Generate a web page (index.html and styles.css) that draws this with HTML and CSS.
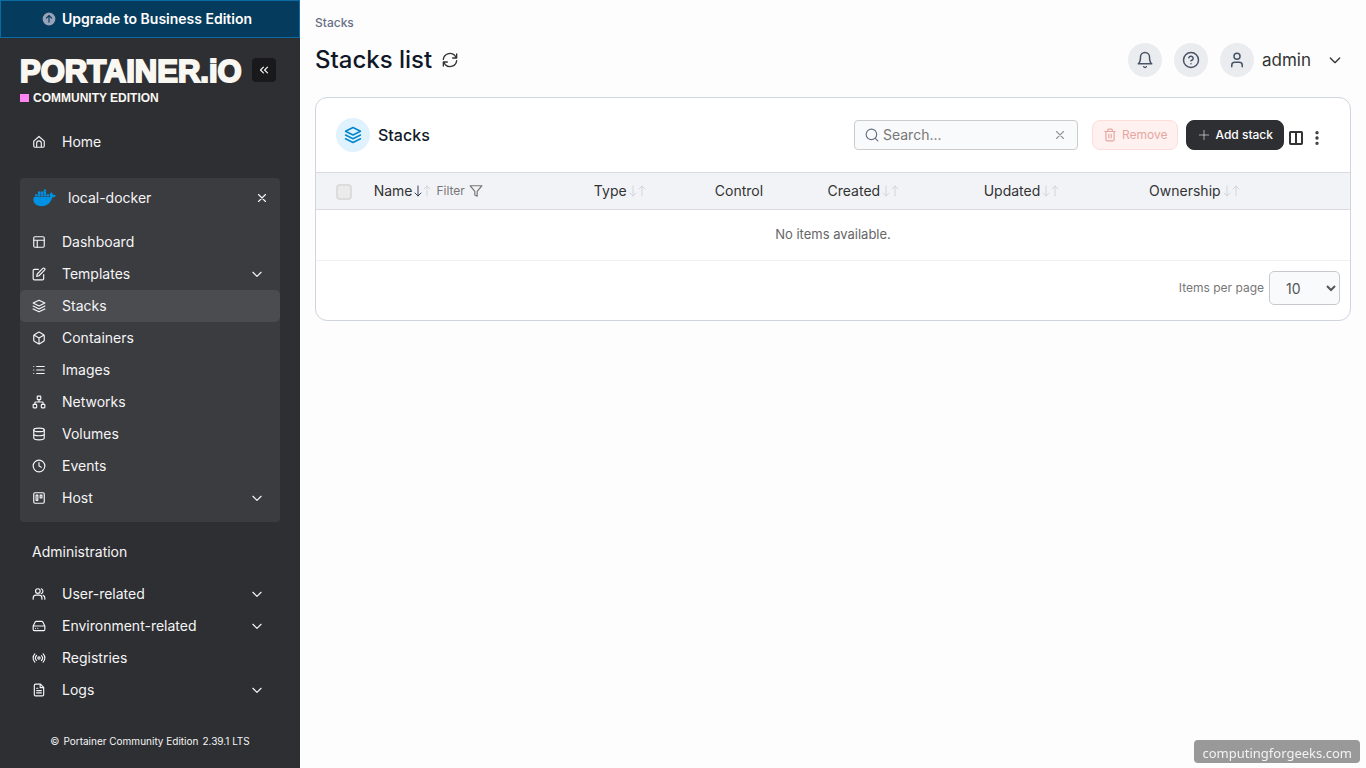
FILE: index.html
```html
<!DOCTYPE html>
<html lang="en">
<head>
  <meta charset="UTF-8">
  <meta name="viewport" content="width=device-width, initial-scale=1">
  <title>Portainer | Stacks</title>
  <link rel="stylesheet" href="styles.css">
</head>
<body>

<!-- Icon set -->
<svg class="sprite" aria-hidden="true">
  <symbol id="home" viewBox="0 0 24 24"><path d="M8 21v-7a4 4 0 0 1 8 0v7M3 10.500 12 2.500l9 8V19a2 2 0 0 1-2 2H5a2 2 0 0 1-2-2z"/></symbol>
  <symbol id="layout" viewBox="0 0 24 24"><rect x="3" y="3" width="18" height="18" rx="2"/><path d="M3 9h18M9 21V9"/></symbol>
  <symbol id="edit" viewBox="0 0 24 24"><path d="M11 4H4a2 2 0 0 0-2 2v14a2 2 0 0 0 2 2h14a2 2 0 0 0 2-2v-7"/><path d="M18.500 2.500a2.120 2.120 0 0 1 3 3L12 15l-4 1 1-4Z"/></symbol>
  <symbol id="layers" viewBox="0 0 24 24"><path d="M12 2 22 7 12 12 2 7ZM2 12l10 5 10-5M2 17l10 5 10-5"/></symbol>
  <symbol id="box" viewBox="0 0 24 24"><path d="M21 8a2 2 0 0 0-1-1.730l-7-4a2 2 0 0 0-2 0l-7 4A2 2 0 0 0 3 8v8a2 2 0 0 0 1 1.730l7 4a2 2 0 0 0 2 0l7-4A2 2 0 0 0 21 16ZM3.300 7 12 12l8.700-5M12 22V12"/></symbol>
  <symbol id="list" viewBox="0 0 24 24"><path d="M8 6h13M8 12h13M8 18h13M3 6h.01M3 12h.01M3 18h.01"/></symbol>
  <symbol id="network" viewBox="0 0 24 24"><rect x="16" y="16" width="6" height="6" rx="1"/><rect x="2" y="16" width="6" height="6" rx="1"/><rect x="9" y="2" width="6" height="6" rx="1"/><path d="M5 16v-3a1 1 0 0 1 1-1h12a1 1 0 0 1 1 1v3M12 12V8"/></symbol>
  <symbol id="database" viewBox="0 0 24 24"><ellipse cx="12" cy="5" rx="9" ry="3"/><path d="M3 5v14c0 1.660 4 3 9 3s9-1.340 9-3V5M21 12c0 1.660-4 3-9 3s-9-1.340-9-3"/></symbol>
  <symbol id="clock" viewBox="0 0 24 24"><circle cx="12" cy="12" r="10"/><path d="M12 6v6l4 2"/></symbol>
  <symbol id="trello" viewBox="0 0 24 24"><rect x="3" y="3" width="18" height="18" rx="2"/><path d="M7 7h3v9H7zM14 7h3v5h-3z"/></symbol>
  <symbol id="users" viewBox="0 0 24 24"><path d="M17 21v-2a5 5 0 0 0-5-5H7a5 5 0 0 0-5 5v2M22 21v-2a5 5 0 0 0-3-4.600M16 3.100a4.500 4.500 0 0 1 0 8.300"/><circle cx="10" cy="7" r="4"/></symbol>
  <symbol id="drive" viewBox="0 0 24 24"><path d="M22 12H2M5.450 5.110 2 12v6a2 2 0 0 0 2 2h16a2 2 0 0 0 2-2v-6l-3.450-6.890A2 2 0 0 0 16.760 4H7.240a2 2 0 0 0-1.790 1.110ZM6 16h.01M10 16h.01"/></symbol>
  <symbol id="radio" viewBox="0 0 24 24"><path d="M4.900 19.100C1 15.200 1 8.800 4.900 4.900M7.800 16.200c-2.300-2.300-2.300-6.100 0-8.500"/><circle cx="12" cy="12" r="2"/><path d="M16.200 7.800c2.300 2.300 2.300 6.100 0 8.500M19.100 4.900C23 8.800 23 15.100 19.100 19"/></symbol>
  <symbol id="file" viewBox="0 0 24 24"><path d="M14.500 2H6a2 2 0 0 0-2 2v16a2 2 0 0 0 2 2h12a2 2 0 0 0 2-2V7.500ZM14 2v6h6M16 13H8M16 17H8M10 9H8"/></symbol>
  <symbol id="chevron" viewBox="0 0 24 24"><path d="m5 9 7 7 7-7"/></symbol>
  <symbol id="chevrons-left" viewBox="0 0 24 24"><path d="m11 17-5-5 5-5M18 17l-5-5 5-5"/></symbol>
  <symbol id="x" viewBox="0 0 24 24"><path d="M18 6 6 18M6 6l12 12"/></symbol>
  <symbol id="refresh" viewBox="0 0 24 24"><path d="M2 11a10 10 0 0 1 17-6l3 4M22 3v6h-6M22 13a10 10 0 0 1-17 6l-3-4M2 21v-6h6"/></symbol>
  <symbol id="bell" viewBox="0 0 24 24"><path d="M6 8a6 6 0 0 1 12 0c0 7 3 9 3 9H3s3-2 3-9M10.300 21a1.940 1.940 0 0 0 3.400 0"/></symbol>
  <symbol id="help" viewBox="0 0 24 24"><circle cx="12" cy="12" r="10"/><path d="M9.090 9a3 3 0 0 1 5.830 1c0 2-3 3-3 3M12 17h.01"/></symbol>
  <symbol id="user" viewBox="0 0 24 24"><circle cx="12" cy="7" r="4"/><path d="M19 21v-2a4 4 0 0 0-4-4H9a4 4 0 0 0-4 4v2"/></symbol>
  <symbol id="search" viewBox="0 0 24 24"><circle cx="11" cy="11" r="9"/><path d="m22 22-4.300-4.300"/></symbol>
  <symbol id="trash" viewBox="0 0 24 24"><path d="M3 6h18M19 6v14a2 2 0 0 1-2 2H7a2 2 0 0 1-2-2V6M8 6V4a2 2 0 0 1 2-2h4a2 2 0 0 1 2 2v2M10 11v6M14 11v6"/></symbol>
  <symbol id="plus" viewBox="0 0 24 24"><path d="M12 4v16M4 12h16"/></symbol>
  <symbol id="columns" viewBox="0 0 24 24"><rect x="3" y="3" width="18" height="18" rx="1"/><path d="M12 3v18"/></symbol>
  <symbol id="dots" viewBox="0 0 24 24"><circle cx="12" cy="4" r="1"/><circle cx="12" cy="12" r="1"/><circle cx="12" cy="20" r="1"/></symbol>
  <symbol id="filter" viewBox="0 0 24 24"><path d="M22 3H2l8 9.460V19l4 2v-8.540Z"/></symbol>
  <symbol id="down" viewBox="0 0 8 12"><path d="M4 1v10M1 8l3 3 3-3"/></symbol>
  <symbol id="up" viewBox="0 0 8 12"><path d="M4 11V1M1 4l3-3 3 3"/></symbol>
</svg>

<div class="app">
  <aside class="sidebar">
    <button class="upgrade">
      <svg class="upgrade-icon" viewBox="0 0 24 24"><circle cx="12" cy="12" r="12"/><path d="M12 18V6M7 11l5-5 5 5"/></svg>
      Upgrade to Business Edition
    </button>

    <div class="brand">
      <a class="logo" href="#">
        <span class="logo-name">PORTAINER.iO</span>
        <span class="logo-edition">COMMUNITY EDITION</span>
      </a>
      <button class="collapse" aria-label="Collapse sidebar"><svg class="icon"><use href="#chevrons-left"/></svg></button>
    </div>

    <nav class="menu">
      <a class="item" href="#"><svg class="icon"><use href="#home"/></svg><span>Home</span></a>

      <div class="environment">
        <div class="environment-head">
          <svg class="docker" viewBox="0 0 24 18">
            <path d="M1 8h17c-.8-1.200-.7-2.800 0-3.900l1-1.100c1 .7 1.700 1.700 1.800 2.800 1.100-.2 2.300 0 3.100.6-.8 1.500-2.100 2-3.800 2C18.500 13.900 15 17.500 9 17.500 3 17.500.3 14 .3 10Z"/>
            <path d="M2.200 5h2.500v2.500H2.200zM5.200 5h2.500v2.500H5.200zM8.200 5h2.500v2.500H8.200zM11.200 5h2.500v2.500h-2.500zM14.200 5h2.500v2.500h-2.500zM5.200 2.300h2.500v2.400H5.200zM8.200 2.300h2.500v2.400H8.200zM11.200 2.300h2.500v2.400h-2.500zM11.200 0h2.500v2h-2.500z"/>
          </svg>
          <span>local-docker</span>
          <button class="close" aria-label="Close environment"><svg class="icon"><use href="#x"/></svg></button>
        </div>
        <a class="item" href="#"><svg class="icon"><use href="#layout"/></svg><span>Dashboard</span></a>
        <a class="item" href="#"><svg class="icon"><use href="#edit"/></svg><span>Templates</span><svg class="icon arrow"><use href="#chevron"/></svg></a>
        <a class="item active" href="#"><svg class="icon"><use href="#layers"/></svg><span>Stacks</span></a>
        <a class="item" href="#"><svg class="icon"><use href="#box"/></svg><span>Containers</span></a>
        <a class="item" href="#"><svg class="icon"><use href="#list"/></svg><span>Images</span></a>
        <a class="item" href="#"><svg class="icon"><use href="#network"/></svg><span>Networks</span></a>
        <a class="item" href="#"><svg class="icon"><use href="#database"/></svg><span>Volumes</span></a>
        <a class="item" href="#"><svg class="icon"><use href="#clock"/></svg><span>Events</span></a>
        <a class="item" href="#"><svg class="icon"><use href="#trello"/></svg><span>Host</span><svg class="icon arrow"><use href="#chevron"/></svg></a>
      </div>

      <h2 class="section">Administration</h2>
      <a class="item" href="#"><svg class="icon"><use href="#users"/></svg><span>User-related</span><svg class="icon arrow"><use href="#chevron"/></svg></a>
      <a class="item" href="#"><svg class="icon"><use href="#drive"/></svg><span>Environment-related</span><svg class="icon arrow"><use href="#chevron"/></svg></a>
      <a class="item" href="#"><svg class="icon"><use href="#radio"/></svg><span>Registries</span></a>
      <a class="item" href="#"><svg class="icon"><use href="#file"/></svg><span>Logs</span><svg class="icon arrow"><use href="#chevron"/></svg></a>
    </nav>

    <footer class="version"><span>©</span><span>Portainer Community Edition</span><span>2.39.1 LTS</span></footer>
  </aside>

  <main class="content">
    <a class="breadcrumb" href="#">Stacks</a>

    <header class="page-header">
      <h1>Stacks list</h1>
      <button class="refresh" aria-label="Refresh"><svg class="icon"><use href="#refresh"/></svg></button>
      <div class="user-area">
        <button class="round" aria-label="Notifications"><svg class="icon"><use href="#bell"/></svg></button>
        <button class="round" aria-label="Help"><svg class="icon"><use href="#help"/></svg></button>
        <button class="account">
          <span class="round"><svg class="icon"><use href="#user"/></svg></span>
          <span class="account-name">admin</span>
          <svg class="icon"><use href="#chevron"/></svg>
        </button>
      </div>
    </header>

    <section class="card">
      <div class="card-header">
        <span class="badge"><svg class="icon"><use href="#layers"/></svg></span>
        <h2>Stacks</h2>
        <div class="search">
          <svg class="icon"><use href="#search"/></svg>
          <input type="text" placeholder="Search..." aria-label="Search">
          <button aria-label="Clear search"><svg class="icon"><use href="#x"/></svg></button>
        </div>
        <div class="actions">
          <button class="btn btn-remove" disabled><svg class="icon"><use href="#trash"/></svg>Remove</button>
          <button class="btn btn-add"><svg class="icon"><use href="#plus"/></svg>Add stack</button>
        </div>
        <div class="settings">
          <button aria-label="Columns"><svg class="icon"><use href="#columns"/></svg></button>
          <button aria-label="Table settings"><svg class="icon"><use href="#dots"/></svg></button>
        </div>
      </div>

      <table class="table">
        <colgroup>
          <col class="col-check"><col class="col-name"><col class="col-type"><col class="col-control"><col class="col-created"><col class="col-updated"><col>
        </colgroup>
        <thead>
          <tr>
            <th class="check"><input type="checkbox" aria-label="Select all" disabled></th>
            <th>
              <div class="th">
                <span>Name</span>
                <span class="sort sorted"><svg><use href="#down"/></svg><svg><use href="#up"/></svg></span>
                <button class="filter">Filter <svg class="icon"><use href="#filter"/></svg></button>
              </div>
            </th>
            <th><div class="th"><span>Type</span><span class="sort"><svg><use href="#down"/></svg><svg><use href="#up"/></svg></span></div></th>
            <th><div class="th"><span>Control</span></div></th>
            <th><div class="th"><span>Created</span><span class="sort"><svg><use href="#down"/></svg><svg><use href="#up"/></svg></span></div></th>
            <th><div class="th"><span>Updated</span><span class="sort"><svg><use href="#down"/></svg><svg><use href="#up"/></svg></span></div></th>
            <th><div class="th"><span>Ownership</span><span class="sort"><svg><use href="#down"/></svg><svg><use href="#up"/></svg></span></div></th>
          </tr>
        </thead>
        <tbody>
          <tr><td class="empty" colspan="7">No items available.</td></tr>
        </tbody>
      </table>

      <div class="card-footer">
        <label for="pageSize">Items per page</label>
        <select id="pageSize">
          <option>10</option>
          <option>25</option>
          <option>50</option>
          <option>100</option>
        </select>
      </div>
    </section>
  </main>
</div>

<div class="watermark">computingforgeeks.com</div>

</body>
</html>
```

FILE: styles.css
```css
* {
  box-sizing: border-box;
}

body {
  margin: 0;
  font-family: Inter, "Liberation Sans", sans-serif;
  font-size: 14px;
  line-height: 20px;
  color: #333;
  background: #fdfdfd;
}

a {
  color: inherit;
  text-decoration: none;
}

button {
  padding: 0;
  border: none;
  background: none;
  font: inherit;
  color: inherit;
  cursor: pointer;
}

h1, h2 {
  margin: 0;
  font-weight: 500;
}

.sprite {
  position: absolute;
  width: 0;
  height: 0;
}

.icon, .sort svg {
  display: block;
  flex: none;
  width: 14px;
  height: 14px;
  fill: none;
  stroke: currentColor;
  stroke-width: 2;
  stroke-linecap: round;
  stroke-linejoin: round;
}

.app {
  display: flex;
  min-height: 100vh;
}

/* Sidebar */
.sidebar {
  flex: none;
  display: flex;
  flex-direction: column;
  width: 300px;
  background: #2e2f33;
  color: #f5f5f6;
}

.upgrade {
  display: flex;
  align-items: center;
  justify-content: center;
  gap: 6px;
  height: 38px;
  padding-right: 6px;
  border: 1px solid #0b6ba3;
  background: #053b5c;
  color: #fff;
  font-weight: 600;
}

.upgrade-icon {
  width: 14px;
  height: 14px;
  fill: #98a2b8;
  stroke: #053b5c;
  stroke-width: 2;
}

.brand {
  display: flex;
  align-items: flex-start;
  justify-content: space-between;
  padding: 20px 24px 0 20px;
}

.logo {
  display: flex;
  flex-direction: column;
  gap: 7px;
  color: #f9f7f2;
}

.logo-name {
  font-family: "Liberation Sans", Arial, sans-serif;
  font-size: 31px;
  font-weight: 700;
  line-height: 27px;
  -webkit-text-stroke: 2px currentColor;
}

.logo-edition {
  display: flex;
  align-items: center;
  gap: 4px;
  font-family: "Liberation Sans", Arial, sans-serif;
  font-size: 12px;
  font-weight: 700;
  line-height: 12px;
}

.logo-edition::before {
  content: "";
  width: 9px;
  height: 8px;
  background: #ff85f3;
}

.collapse {
  display: grid;
  place-items: center;
  width: 24px;
  height: 24px;
  border-radius: 4px;
  background: #19191b;
}

.menu {
  padding: 22px 20px 0;
}

.item {
  display: flex;
  align-items: center;
  gap: 16px;
  height: 32px;
  padding: 0 16px 0 12px;
  border-radius: 5px;
}

.item.active {
  background: #4b4c50;
}

.arrow {
  margin-left: auto;
}

.environment {
  margin: 20px 0;
  padding-bottom: 8px;
  border-radius: 4px;
  background: #3b3c40;
}

.environment-head {
  display: flex;
  align-items: center;
  gap: 12px;
  height: 40px;
  margin-bottom: 8px;
  padding: 0 11px 0 13px;
}

.docker {
  width: 23px;
  height: 18px;
  fill: #0091e2;
}

.close {
  margin-left: auto;
}

.section {
  margin-bottom: 16px;
  padding: 0 12px;
  font-size: 14px;
  font-weight: 400;
  line-height: 20px;
}

.version {
  display: flex;
  justify-content: center;
  gap: 4px;
  margin-top: auto;
  padding-bottom: 17px;
  font-size: 10px;
  line-height: 20px;
}

/* Page */
.content {
  flex: 1;
  min-width: 0;
  padding: 13px 15px;
}

.breadcrumb {
  display: block;
  font-size: 12px;
  font-weight: 500;
  line-height: 20px;
  color: #667085;
}

.page-header {
  display: flex;
  align-items: center;
  gap: 10px;
  height: 54px;
  margin-bottom: 10px;
}

.page-header h1 {
  font-size: 24px;
  line-height: 32px;
  color: #101828;
}

.refresh .icon {
  width: 16px;
  height: 16px;
}

.user-area {
  display: flex;
  align-items: center;
  gap: 12px;
  margin-left: auto;
  padding-right: 8px;
}

.round {
  display: grid;
  place-items: center;
  width: 34px;
  height: 34px;
  border-radius: 50%;
  background: #ebecf0;
  color: #475467;
}

.round .icon {
  width: 18px;
  height: 18px;
}

.account {
  display: flex;
  align-items: center;
  gap: 8px;
  font-size: 17px;
}

.account-name {
  margin-right: 8px;
}

.account > .icon {
  width: 16px;
  height: 16px;
}

.card {
  border: 1px solid #cfd4e0;
  border-radius: 12px;
  background: #fff;
  overflow: hidden;
}

.card-header {
  display: flex;
  align-items: center;
  height: 74px;
  padding: 0 25px 0 20px;
}

.badge {
  display: grid;
  place-items: center;
  width: 34px;
  height: 34px;
  margin-right: 8px;
  border-radius: 50%;
  background: #e0f2fe;
  color: #0086c9;
}

.badge .icon {
  width: 18px;
  height: 18px;
}

.card-header h2 {
  font-size: 16px;
  color: #101828;
}

.search {
  display: flex;
  align-items: center;
  gap: 4px;
  width: 224px;
  height: 30px;
  margin-left: auto;
  padding: 0 10px;
  border: 1px solid #ccc;
  border-radius: 4px;
  background: #f9fafb;
  color: #667085;
}

.search input {
  flex: 1;
  min-width: 0;
  padding: 0;
  border: none;
  outline: none;
  background: none;
  font: inherit;
}

.search input::placeholder {
  color: #777;
}

.search button {
  color: #999;
}

.actions {
  display: flex;
  gap: 8px;
  margin-left: 14px;
}

.btn {
  display: flex;
  align-items: center;
  gap: 5px;
  height: 30px;
  padding: 0 10px;
  border: 1px solid;
  border-radius: 8px;
  font-size: 12px;
  font-weight: 500;
}

.btn-remove {
  border-color: #fddcd9;
  background: #fff1f0;
  color: #e5a6a1;
  font-weight: 400;
}

.btn-add {
  gap: 4px;
  border-color: #2e2f33;
  background: #2e2f33;
  color: #fff;
}

.btn-add .icon {
  stroke-width: 1;
}

.settings {
  display: flex;
  gap: 5px;
  margin-left: 4px;
  padding-top: 6px;
}

.settings .icon {
  width: 16px;
  height: 16px;
  stroke-width: 3;
}

.table {
  width: 100%;
  table-layout: fixed;
  border-collapse: collapse;
}

.col-check { width: 4.8%; }
.col-name { width: 21.3%; }
.col-type { width: 11.7%; }
.col-control { width: 10.9%; }
.col-created { width: 15.1%; }
.col-updated { width: 16%; }

.table th {
  height: 37px;
  padding: 0 8px;
  border-top: 1px solid #d9dbe0;
  border-bottom: 1px solid #d9dbe0;
  background: #f2f3f7;
  font-weight: 400;
  text-align: left;
}

.table .check {
  padding-left: 20px;
}

.check input {
  display: block;
  appearance: none;
  width: 16px;
  height: 16px;
  margin: 2px 0 0;
  border: 2px solid #dcdcdc;
  border-radius: 4px;
  background: #ebebeb;
}

.th {
  display: flex;
  align-items: center;
  gap: 2px;
}

.sort {
  display: flex;
  gap: 1px;
  color: #d0d5dd;
}

.sort svg {
  width: 8px;
  height: 12px;
  stroke-width: 1;
}

.sorted svg:first-child {
  color: #344054;
}

.filter {
  display: flex;
  align-items: center;
  gap: 4px;
  margin-left: 3px;
  font-size: 12px;
  color: #777;
}

.table .empty {
  height: 51px;
  padding: 0 0 2px;
  border-bottom: 1px solid #f0f0f2;
  font-size: 13px;
  color: #666;
  text-align: center;
}

.card-footer {
  display: flex;
  align-items: center;
  justify-content: flex-end;
  gap: 5px;
  padding: 10px 10px 15px;
}

.card-footer label {
  font-size: 12px;
  color: #777;
}

.card-footer select {
  width: 71px;
  height: 34px;
  padding: 0 0 0 12px;
  border: 1px solid #c6c9ce;
  border-radius: 5px;
  background: #f9fafb;
  font: inherit;
  color: #555;
}

/* Label fixed over the page corner */
.watermark {
  position: fixed;
  right: 6px;
  bottom: 5px;
  padding: 3px 8px 0;
  border-radius: 4px;
  background: #999;
  font-family: "Noto Sans", sans-serif;
  font-size: 13px;
  color: #f2f2f2;
}
```
